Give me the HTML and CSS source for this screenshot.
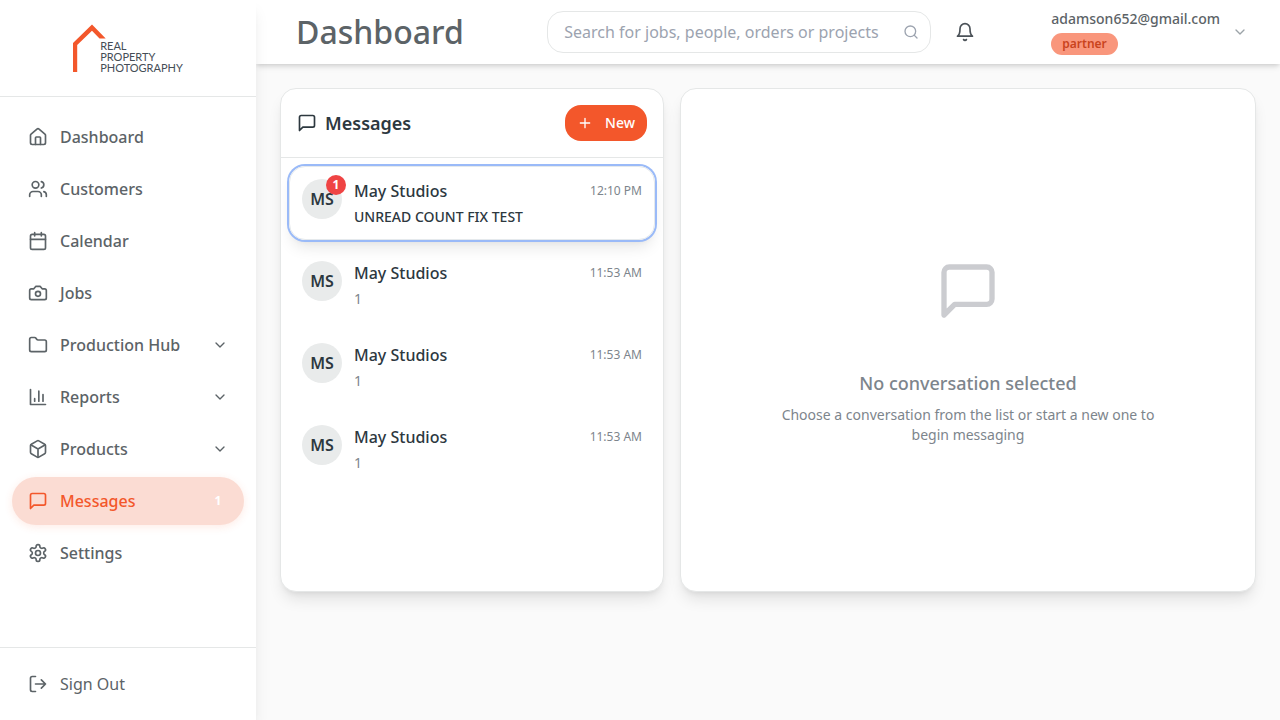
FILE: index.html
```html
<!DOCTYPE html>
<html lang="en">
<head>
<meta charset="utf-8">
<meta name="viewport" content="width=device-width, initial-scale=1">
<title>Messages - Real Property Photography</title>
<link rel="stylesheet" href="styles.css">
</head>
<body>
<svg class="sprite" aria-hidden="true">
  <symbol id="message" viewBox="0 0 24 24"><path d="M21 15a2 2 0 0 1-2 2H7l-4 4V5a2 2 0 0 1 2-2h14a2 2 0 0 1 2 2z"/></symbol>
  <symbol id="chevron" viewBox="0 0 24 24"><path d="m6 9 6 6 6-6"/></symbol>
</svg>
<div class="app">
  <aside class="sidebar">
    <div class="brand">
      <a class="logo" href="#">
        <svg class="logo-mark" viewBox="0 0 33 48" aria-hidden="true"><path d="M0 48V19L19 .6 32.700 14.500H26.500L19 6.800 4.200 21V48z"/></svg>
        <span class="logo-text">REAL<br>PROPERTY<br>PHOTOGRAPHY</span>
      </a>
    </div>
    <nav class="nav">
      <a class="nav-item" href="#"><svg class="icon" viewBox="0 0 24 24"><path d="M15 21v-8a1 1 0 0 0-1-1h-4a1 1 0 0 0-1 1v8"/><path d="M3 10a2 2 0 0 1 .709-1.528l7-5.999a2 2 0 0 1 2.582 0l7 5.999A2 2 0 0 1 21 10v9a2 2 0 0 1-2 2H5a2 2 0 0 1-2-2z"/></svg><span>Dashboard</span></a>
      <a class="nav-item" href="#"><svg class="icon" viewBox="0 0 24 24"><path d="M16 21v-2a4 4 0 0 0-4-4H6a4 4 0 0 0-4 4v2"/><circle cx="9" cy="7" r="4"/><path d="M22 21v-2a4 4 0 0 0-3-3.870"/><path d="M16 3.130a4 4 0 0 1 0 7.750"/></svg><span>Customers</span></a>
      <a class="nav-item" href="#"><svg class="icon" viewBox="0 0 24 24"><path d="M8 2v4M16 2v4M3 10h18"/><rect x="3" y="4" width="18" height="18" rx="2"/></svg><span>Calendar</span></a>
      <a class="nav-item" href="#"><svg class="icon" viewBox="0 0 24 24"><path d="M14.500 4h-5L7 7H4a2 2 0 0 0-2 2v9a2 2 0 0 0 2 2h16a2 2 0 0 0 2-2V9a2 2 0 0 0-2-2h-3z"/><circle cx="12" cy="13" r="3"/></svg><span>Jobs</span></a>
      <button class="nav-item" type="button"><svg class="icon" viewBox="0 0 24 24"><path d="M20 20a2 2 0 0 0 2-2V8a2 2 0 0 0-2-2h-7.900a2 2 0 0 1-1.690-.9L9.600 3.900A2 2 0 0 0 7.930 3H4a2 2 0 0 0-2 2v13a2 2 0 0 0 2 2z"/></svg><span>Production Hub</span><svg class="icon icon-sm nav-end"><use href="#chevron"/></svg></button>
      <button class="nav-item" type="button"><svg class="icon" viewBox="0 0 24 24"><path d="M3 3v18h18M18 17V9M13 17V5M8 17v-3"/></svg><span>Reports</span><svg class="icon icon-sm nav-end"><use href="#chevron"/></svg></button>
      <button class="nav-item" type="button"><svg class="icon" viewBox="0 0 24 24"><path d="M21 8a2 2 0 0 0-1-1.730l-7-4a2 2 0 0 0-2 0l-7 4A2 2 0 0 0 3 8v8a2 2 0 0 0 1 1.730l7 4a2 2 0 0 0 2 0l7-4A2 2 0 0 0 21 16Z"/><path d="m3.300 7 8.700 5 8.700-5M12 22V12"/></svg><span>Products</span><svg class="icon icon-sm nav-end"><use href="#chevron"/></svg></button>
      <a class="nav-item nav-item-active" href="#" aria-current="page"><svg class="icon"><use href="#message"/></svg><span>Messages</span><span class="nav-count nav-end">1</span></a>
      <a class="nav-item" href="#"><svg class="icon" viewBox="0 0 24 24"><path d="M12.220 2h-.44a2 2 0 0 0-2 2v.18a2 2 0 0 1-1 1.730l-.43.25a2 2 0 0 1-2 0l-.15-.08a2 2 0 0 0-2.730.73l-.22.38a2 2 0 0 0 .73 2.730l.15.1a2 2 0 0 1 1 1.720v.51a2 2 0 0 1-1 1.740l-.15.09a2 2 0 0 0-.73 2.730l.22.38a2 2 0 0 0 2.730.73l.15-.08a2 2 0 0 1 2 0l.43.25a2 2 0 0 1 1 1.730V20a2 2 0 0 0 2 2h.44a2 2 0 0 0 2-2v-.18a2 2 0 0 1 1-1.730l.43-.25a2 2 0 0 1 2 0l.15.08a2 2 0 0 0 2.730-.73l.22-.39a2 2 0 0 0-.73-2.730l-.15-.08a2 2 0 0 1-1-1.740v-.5a2 2 0 0 1 1-1.740l.15-.09a2 2 0 0 0 .73-2.730l-.22-.38a2 2 0 0 0-2.730-.73l-.15.08a2 2 0 0 1-2 0l-.43-.25a2 2 0 0 1-1-1.730V4a2 2 0 0 0-2-2z"/><circle cx="12" cy="12" r="3"/></svg><span>Settings</span></a>
    </nav>
    <div class="sidebar-foot">
      <button class="nav-item sign-out" type="button"><svg class="icon" viewBox="0 0 24 24"><path d="M9 21H5a2 2 0 0 1-2-2V5a2 2 0 0 1 2-2h4M16 17l5-5-5-5M21 12H9"/></svg><span>Sign Out</span></button>
    </div>
  </aside>

  <div class="page">
    <header class="topbar">
      <h1 class="page-title">Dashboard</h1>
      <form class="search" role="search">
        <input class="search-input" type="search" aria-label="Search" placeholder="Search for jobs, people, orders or projects">
        <svg class="icon icon-sm search-icon" viewBox="0 0 24 24"><circle cx="11" cy="11" r="8"/><path d="m21 21-4.300-4.300"/></svg>
      </form>
      <button class="bell" type="button" aria-label="Notifications"><svg class="icon" viewBox="0 0 24 24"><path d="M6 8a6 6 0 0 1 12 0c0 7 3 9 3 9H3s3-2 3-9"/><path d="M10.300 21a1.940 1.940 0 0 0 3.400 0"/></svg></button>
      <button class="account" type="button">
        <span class="account-info"><span class="account-email">adamson652@gmail.com</span><span class="role">partner</span></span>
        <svg class="icon icon-sm account-chevron"><use href="#chevron"/></svg>
      </button>
    </header>

    <main class="content">
      <section class="card">
        <div class="card-head">
          <h2 class="card-title"><svg class="icon"><use href="#message"/></svg>Messages</h2>
          <button class="new-button" type="button"><svg class="icon icon-sm" viewBox="0 0 24 24"><path d="M5 12h14M12 5v14"/></svg>New</button>
        </div>
        <div class="threads">
          <button class="thread thread-selected" type="button">
            <span class="avatar">MS<span class="unread">1</span></span>
            <span class="thread-body"><span class="thread-top"><span class="thread-name">May Studios</span><time class="thread-time">12:10 PM</time></span><span class="preview preview-unread">UNREAD COUNT FIX TEST</span></span>
          </button>
          <button class="thread" type="button">
            <span class="avatar">MS</span>
            <span class="thread-body"><span class="thread-top"><span class="thread-name">May Studios</span><time class="thread-time">11:53 AM</time></span><span class="preview">1</span></span>
          </button>
          <button class="thread" type="button">
            <span class="avatar">MS</span>
            <span class="thread-body"><span class="thread-top"><span class="thread-name">May Studios</span><time class="thread-time">11:53 AM</time></span><span class="preview">1</span></span>
          </button>
          <button class="thread" type="button">
            <span class="avatar">MS</span>
            <span class="thread-body"><span class="thread-top"><span class="thread-name">May Studios</span><time class="thread-time">11:53 AM</time></span><span class="preview">1</span></span>
          </button>
        </div>
      </section>
      <section class="card empty">
        <svg class="icon empty-icon"><use href="#message"/></svg>
        <h3 class="empty-title">No conversation selected</h3>
        <p class="empty-text">Choose a conversation from the list or start a new one to begin messaging</p>
      </section>
    </main>
  </div>
</div>
</body>
</html>
```

FILE: styles.css
```css
:root {
  --accent: #f3572b;
  --ink: #2d383f;
  --body: #5c6367;
  --muted: #7d858c;
  --line: #e5e7e7;
  --card-shadow: 0 10px 15px -3px rgba(0, 0, 0, 0.1), 0 4px 6px -4px rgba(0, 0, 0, 0.1);
}

* {
  box-sizing: border-box;
}

body {
  margin: 0;
  background: #fafafa;
  color: var(--ink);
  font-family: "Noto Sans", sans-serif;
  font-size: 16px;
  line-height: 24px;
}

h1,
h2,
h3,
p {
  margin: 0;
}

button,
input {
  font: inherit;
  color: inherit;
}

button {
  border: 0;
  background: none;
  text-align: left;
  cursor: pointer;
}

a {
  color: inherit;
  text-decoration: none;
}

.sprite {
  display: none;
}

.icon {
  display: block;
  flex: none;
  width: 20px;
  height: 20px;
  fill: none;
  stroke: currentColor;
  stroke-width: 2;
  stroke-linecap: round;
  stroke-linejoin: round;
}

.icon-sm {
  width: 16px;
  height: 16px;
}

.app {
  display: flex;
  min-height: 100vh;
}

/* Sidebar */
.sidebar {
  position: relative;
  z-index: 2;
  display: flex;
  flex: none;
  flex-direction: column;
  width: 256px;
  background: #fff;
  box-shadow: var(--card-shadow);
}

.brand {
  display: flex;
  justify-content: center;
  padding: 24px;
  border-bottom: 1px solid var(--line);
}

.logo {
  display: flex;
  align-items: flex-end;
}

.logo-mark {
  display: block;
  width: 33px;
  height: 48px;
  margin-right: -6px;
  fill: var(--accent);
}

.logo-text {
  height: 32px;
  color: #454d56;
  font-family: Lato, sans-serif;
  font-size: 11px;
  line-height: 11px;
}

.nav {
  display: flex;
  flex: 1;
  flex-direction: column;
  gap: 4px;
  padding: 16px 12px;
}

.nav-item {
  display: flex;
  align-items: center;
  gap: 12px;
  width: 100%;
  height: 48px;
  padding: 0 16px;
  border-radius: 24px;
  color: var(--body);
  font-weight: 500;
}

.nav-end {
  margin-left: auto;
}

.nav-item-active {
  background: #fbdcd3;
  box-shadow: 0 2px 8px rgba(244, 87, 43, 0.12);
  color: var(--accent);
}

.nav-count {
  width: 20px;
  color: #fff;
  font-size: 12px;
  font-weight: 700;
  text-align: center;
}

.sidebar-foot {
  padding: 12px;
  border-top: 1px solid var(--line);
}

.sign-out {
  font-weight: 400;
}

/* Top bar */
.page {
  display: flex;
  flex: 1;
  flex-direction: column;
  min-width: 0;
}

.topbar {
  display: flex;
  align-items: center;
  height: 64px;
  padding: 0 24px 0 40px;
  background: #fff;
  box-shadow: 0 4px 6px -1px rgba(0, 0, 0, 0.1), 0 2px 4px -1px rgba(0, 0, 0, 0.1);
}

.page-title {
  color: var(--body);
  font-size: 32px;
  font-weight: 500;
  line-height: 40px;
}

.search {
  position: relative;
  width: 384px;
  margin-left: auto;
}

.search-input {
  display: block;
  width: 100%;
  height: 42px;
  padding: 0 32px 0 16px;
  border: 1px solid var(--line);
  border-radius: 16px;
  background: #fff;
  appearance: none;
}

.search-input::-webkit-search-cancel-button {
  display: none;
}

.search-input::placeholder {
  color: #9ca3af;
  opacity: 1;
}

.search-icon {
  position: absolute;
  top: 13px;
  right: 12px;
  color: #9ca3af;
}

.bell {
  margin-left: 16px;
  padding: 8px;
  color: #4b5258;
}

.account {
  display: flex;
  align-items: center;
  gap: 12px;
  margin-left: 60px;
  padding: 8px;
}

.account-info {
  display: flex;
  flex-direction: column;
  align-items: flex-start;
  gap: 4px;
}

.account-email {
  color: var(--body);
  font-size: 14px;
  font-weight: 500;
  line-height: 20px;
}

.role {
  padding: 3px 11px;
  border-radius: 11px;
  background: #f9967c;
  color: #c9431d;
  font-size: 12px;
  font-weight: 600;
  line-height: 16px;
}

.account-chevron {
  color: #9ca3a8;
}

/* Messages */
.content {
  display: grid;
  grid-template-columns: minmax(0, 2fr) minmax(0, 3fr);
  gap: 16px;
  height: calc(70vh + 48px);
  padding: 24px;
}

.card {
  display: flex;
  flex-direction: column;
  min-height: 0;
  border: 1px solid var(--line);
  border-radius: 16px;
  background: #fff;
  box-shadow: var(--card-shadow);
}

.card-head {
  display: flex;
  align-items: center;
  justify-content: space-between;
  padding: 16px;
  border-bottom: 1px solid var(--line);
}

.card-title {
  display: flex;
  align-items: center;
  gap: 8px;
  font-size: 18px;
  font-weight: 600;
}

.new-button {
  display: flex;
  align-items: center;
  gap: 12px;
  height: 36px;
  padding: 0 12px;
  border-radius: 16px;
  background: var(--accent);
  color: #fff;
  font-size: 14px;
  font-weight: 500;
}

.threads {
  display: flex;
  flex-direction: column;
  gap: 8px;
  padding: 8px;
  overflow-y: auto;
}

.thread {
  display: flex;
  align-items: flex-start;
  gap: 12px;
  padding: 12px;
  border: 1px solid transparent;
  border-radius: 16px;
}

.thread-selected {
  border-color: #e5e9ec;
  box-shadow: 0 0 0 2px #9abaf8, var(--card-shadow);
}

.avatar {
  position: relative;
  flex: none;
  width: 40px;
  height: 40px;
  border-radius: 50%;
  background: #e9ebeb;
  font-weight: 600;
  line-height: 40px;
  text-align: center;
}

.unread {
  position: absolute;
  top: -4px;
  right: -4px;
  width: 20px;
  height: 20px;
  border-radius: 50%;
  background: #ef4444;
  color: #fff;
  font-size: 12px;
  font-weight: 700;
  line-height: 20px;
}

.thread-body {
  display: flex;
  flex: 1;
  flex-direction: column;
  gap: 4px;
  min-width: 0;
}

.thread-top {
  display: flex;
  align-items: center;
  justify-content: space-between;
}

.thread-name {
  font-weight: 500;
}

.thread-time {
  color: var(--muted);
  font-size: 12px;
  line-height: 16px;
}

.preview {
  color: var(--muted);
  font-size: 14px;
  line-height: 20px;
}

.preview-unread {
  color: var(--ink);
  font-weight: 500;
}

.empty {
  align-items: center;
  justify-content: center;
  padding: 24px;
  color: var(--muted);
  text-align: center;
}

.empty-icon {
  width: 64px;
  height: 64px;
  margin: 24px 0 46px;
  color: #cbccd0;
}

.empty-title {
  margin-bottom: 8px;
  font-size: 18px;
  font-weight: 500;
  line-height: 28px;
}

.empty-text {
  max-width: 384px;
  font-size: 14px;
  line-height: 20px;
}
```
